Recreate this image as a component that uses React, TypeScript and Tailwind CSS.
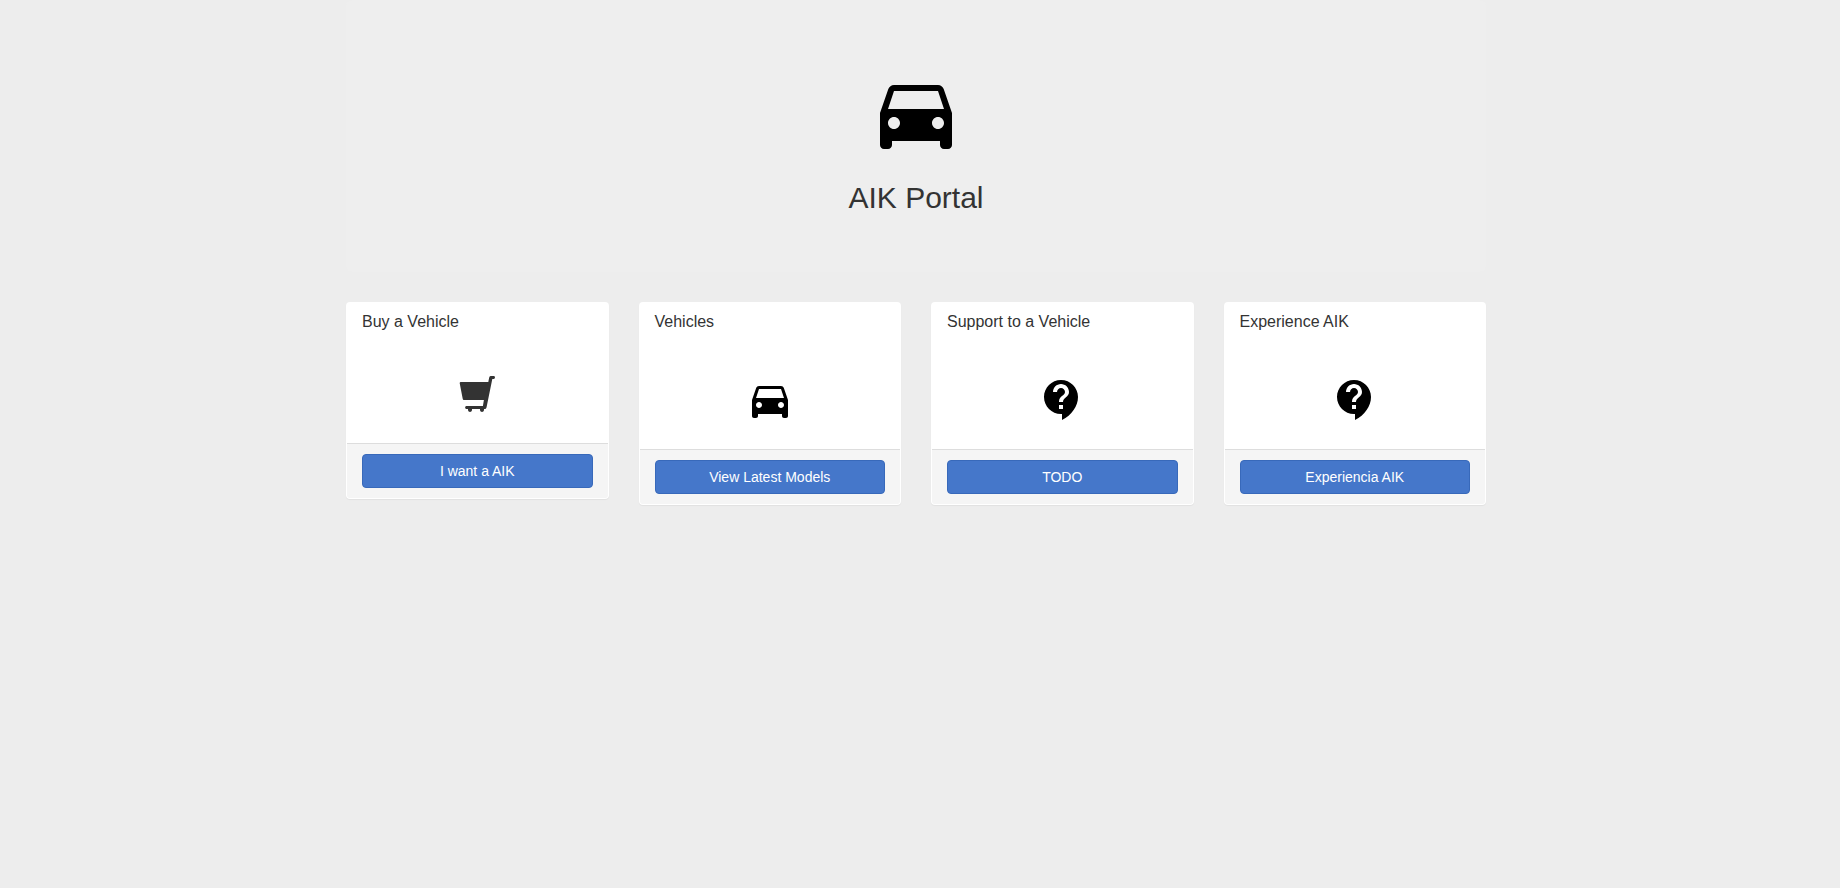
import type { ReactNode } from "react";

const CAR_PATH =
  "M18.92 6.01C18.72 5.42 18.16 5 17.5 5h-11c-.66 0-1.21.42-1.42 1.01L3 12v8c0 .55.45 1 1 1h1c.55 0 1-.45 1-1v-1h12v1c0 .55.45 1 1 1h1c.55 0 1-.45 1-1v-8l-2.08-5.99zM6.5 16c-.83 0-1.5-.67-1.5-1.5S5.67 13 6.5 13s1.5.67 1.5 1.5S7.33 16 6.5 16zm11 0c-.83 0-1.5-.67-1.5-1.5s.67-1.5 1.5-1.5 1.5.67 1.5 1.5-.67 1.5-1.5 1.5zM5 11l1.5-4.5h11L19 11H5z";

function CarIcon({ className }: { className: string }) {
  return (
    <svg viewBox="0 0 24 24" className={className} fill="black" aria-hidden="true">
      <path d={CAR_PATH} />
    </svg>
  );
}

function SupportIcon() {
  return (
    <svg viewBox="0 0 24 24" className="size-12" fill="black" aria-hidden="true">
      <path d="M11.5 2C6.81 2 3 5.81 3 10.5S6.81 19 11.5 19h.5v3c4.86-2.34 8-7 8-11.5C20 5.81 16.19 2 11.5 2zm1 14.5h-2v-2h2v2zm0-3.500h-2c0-3.250 3-3 3-5 0-1.100-.9-2-2-2s-2 .9-2 2h-2c0-2.210 1.790-4 4-4s4 1.790 4 4c0 2.500-3 2.750-3 5z" />
    </svg>
  );
}

function CartIcon() {
  return (
    <svg viewBox="0 0 36 36" className="size-9" fill="#333" aria-hidden="true">
      <path d="M0.700 7.200Q0.600 6 1.800 6H29.300L30.200 1.400Q30.600 0 32 0H35Q36 0.200 36 1.300T35 2.900H33.300L27.500 31.500Q27 33 25.900 33H25V34.300Q24.700 36 23 36T21 34.300V33H13V34.300Q12.700 36 11 36T9 34.300V33H7.300Q6.100 32.700 6.100 31.500T7.300 30H23.900L24.900 24H4.900Q3.900 24 3.700 22.700Z" />
    </svg>
  );
}

function Card({
  title,
  action,
  children,
}: {
  title: string;
  action: string;
  children: ReactNode;
}) {
  return (
    <section className="rounded-[4px] border border-transparent bg-white shadow-[0_1px_1px_rgba(0,0,0,0.05)]">
      <h2 className="px-[15px] py-[10px] text-[16px] leading-[18px]">{title}</h2>
      <div className="flex justify-center px-[15px] pt-[35px] pb-[25px]">{children}</div>
      <div className="rounded-b-[3px] border-t border-[#ddd] bg-[#f5f5f5] px-[15px] py-[10px]">
        <button
          type="button"
          className="block w-full cursor-pointer rounded-[4px] border border-[#3869ba] bg-[#4577ca] px-3 py-[6px] text-[14px] leading-[20px] text-white"
        >
          {action}
        </button>
      </div>
    </section>
  );
}

export default function App() {
  return (
    <div className="min-h-screen bg-[#ededed] pr-2 font-['Liberation_Sans',Arial,sans-serif] text-[#333]">
      <div className="mx-auto max-w-[1170px] px-[15px]">
        <header className="mb-[30px] flex flex-col items-center rounded-[6px] bg-[#eee] pt-[65px] pb-[58px]">
          <CarIcon className="size-24" />
          <h1 className="mt-5 text-[30px] leading-[33px]">AIK Portal</h1>
        </header>
        <main className="grid items-start gap-[30px] sm:grid-cols-2 lg:grid-cols-4">
          <Card title="Buy a Vehicle" action="I want a AIK">
            <div className="pb-[6px]">
              <CartIcon />
            </div>
          </Card>
          <Card title="Vehicles" action="View Latest Models">
            <CarIcon className="size-12" />
          </Card>
          <Card title="Support to a Vehicle" action="TODO">
            <SupportIcon />
          </Card>
          <Card title="Experience AIK" action="Experiencia AIK">
            <SupportIcon />
          </Card>
        </main>
      </div>
    </div>
  );
}
